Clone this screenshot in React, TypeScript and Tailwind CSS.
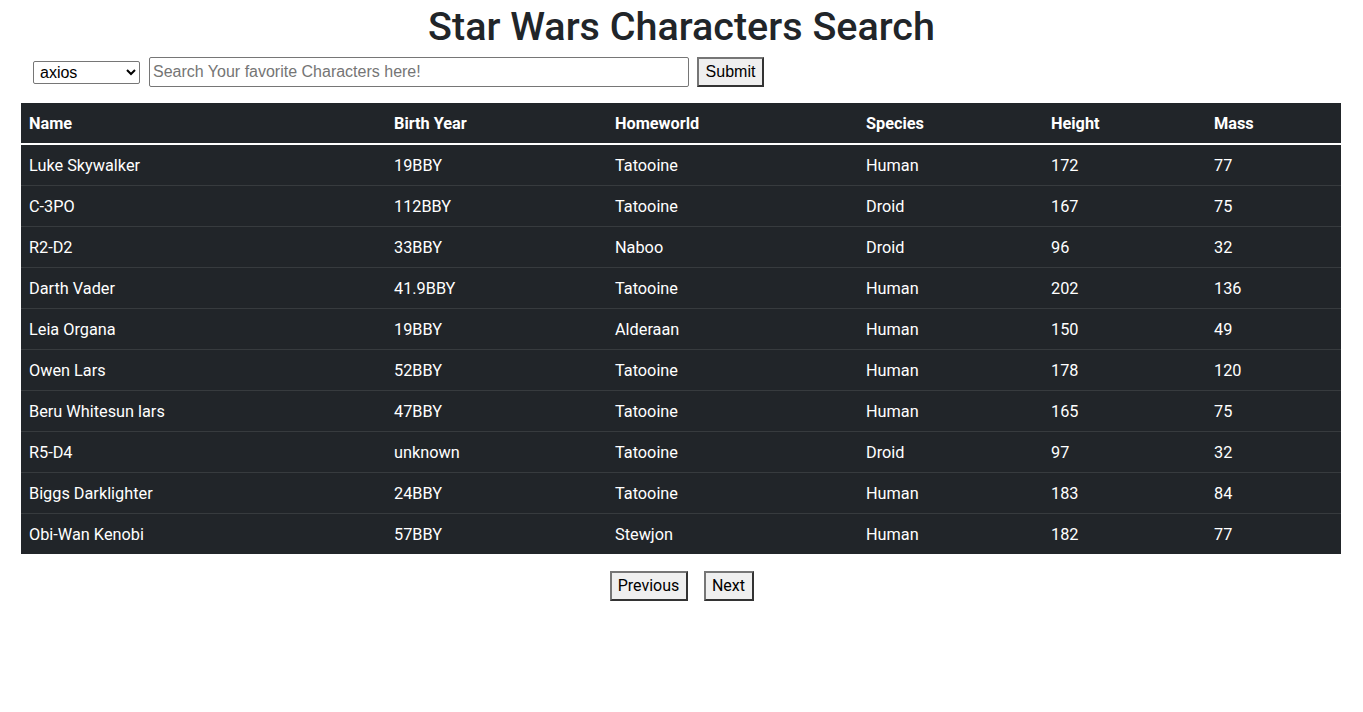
import React from "react";

interface Character {
  name: string;
  birthYear: string;
  homeworld: string;
  species: string;
  height: string;
  mass: string;
}

const characters: Character[] = [
  { name: "Luke Skywalker", birthYear: "19BBY", homeworld: "Tatooine", species: "Human", height: "172", mass: "77" },
  { name: "C-3PO", birthYear: "112BBY", homeworld: "Tatooine", species: "Droid", height: "167", mass: "75" },
  { name: "R2-D2", birthYear: "33BBY", homeworld: "Naboo", species: "Droid", height: "96", mass: "32" },
  { name: "Darth Vader", birthYear: "41.9BBY", homeworld: "Tatooine", species: "Human", height: "202", mass: "136" },
  { name: "Leia Organa", birthYear: "19BBY", homeworld: "Alderaan", species: "Human", height: "150", mass: "49" },
  { name: "Owen Lars", birthYear: "52BBY", homeworld: "Tatooine", species: "Human", height: "178", mass: "120" },
  { name: "Beru Whitesun lars", birthYear: "47BBY", homeworld: "Tatooine", species: "Human", height: "165", mass: "75" },
  { name: "R5-D4", birthYear: "unknown", homeworld: "Tatooine", species: "Droid", height: "97", mass: "32" },
  { name: "Biggs Darklighter", birthYear: "24BBY", homeworld: "Tatooine", species: "Human", height: "183", mass: "84" },
  { name: "Obi-Wan Kenobi", birthYear: "57BBY", homeworld: "Stewjon", species: "Human", height: "182", mass: "77" },
];

const headers = ["Name", "Birth Year", "Homeworld", "Species", "Height", "Mass"];
const widths = ["w-[365px]", "w-[221px]", "w-[251px]", "w-[185px]", "w-[163px]", "w-[135px]"];

function App() {
  return (
    <div className="min-h-[712px] bg-white text-[#212529] font-['Roboto',sans-serif]">
      <h1 className="pt-[4px] text-center text-[39.5px] leading-[46px] font-medium">
        Star Wars Characters Search
      </h1>

      {/* search controls */}
      <div className="mt-[7px] flex items-center pl-[33px] font-['Liberation_Sans',Arial,sans-serif]">
        <select className="h-[23px] w-[107px] border border-[#767676] rounded-[2px] bg-white px-[2px] text-[16px] text-black">
          <option>axios</option>
          <option>fetch</option>
        </select>
        <input
          className="ml-[9px] h-[30px] w-[540px] border border-[#767676] rounded-[2px] px-[3px] text-[16px] text-black placeholder:text-[#757575]"
          placeholder="Search Your favorite Characters here!"
        />
        <button className="ml-[8px] h-[30px] w-[67px] border-2 border-t-[#767676] border-l-[#767676] border-r-[#333] border-b-[#333] bg-[#efefef] text-[16px] text-black">
          Submit
        </button>
      </div>

      {/* results */}
      <div className="mt-[16px] pl-[21px]">
        <table className="w-[1320px] table-fixed border-collapse bg-[#212529] text-white text-[16.3px] leading-[24px]">
          <thead>
            <tr className="border-b-2 border-white">
              {headers.map((h, i) => (
                <th key={h} className={`${widths[i]} px-[8px] pt-[9px] pb-[7px] text-left font-bold`}>
                  {h}
                </th>
              ))}
            </tr>
          </thead>
          <tbody>
            {characters.map((c, i) => (
              <tr key={c.name} className={i < characters.length - 1 ? "border-b border-[#373b3e]" : ""}>
                <td className="px-[8px] pt-[9px] pb-[7px]">{c.name}</td>
                <td className="px-[8px] pt-[9px] pb-[7px]">{c.birthYear}</td>
                <td className="px-[8px] pt-[9px] pb-[7px]">{c.homeworld}</td>
                <td className="px-[8px] pt-[9px] pb-[7px]">{c.species}</td>
                <td className="px-[8px] pt-[9px] pb-[7px]">{c.height}</td>
                <td className="px-[8px] pt-[9px] pb-[7px]">{c.mass}</td>
              </tr>
            ))}
          </tbody>
        </table>
      </div>

      <div className="mt-[17px] flex justify-center gap-[16px]">
        <button className="h-[30px] w-[78px] border-2 border-t-[#767676] border-l-[#767676] border-r-[#333] border-b-[#333] bg-[#efefef] text-[16px] text-black">
          Previous
        </button>
        <button className="h-[30px] w-[50px] border-2 border-t-[#767676] border-l-[#767676] border-r-[#333] border-b-[#333] bg-[#efefef] text-[16px] text-black">
          Next
        </button>
      </div>
    </div>
  );
}

export default App;
